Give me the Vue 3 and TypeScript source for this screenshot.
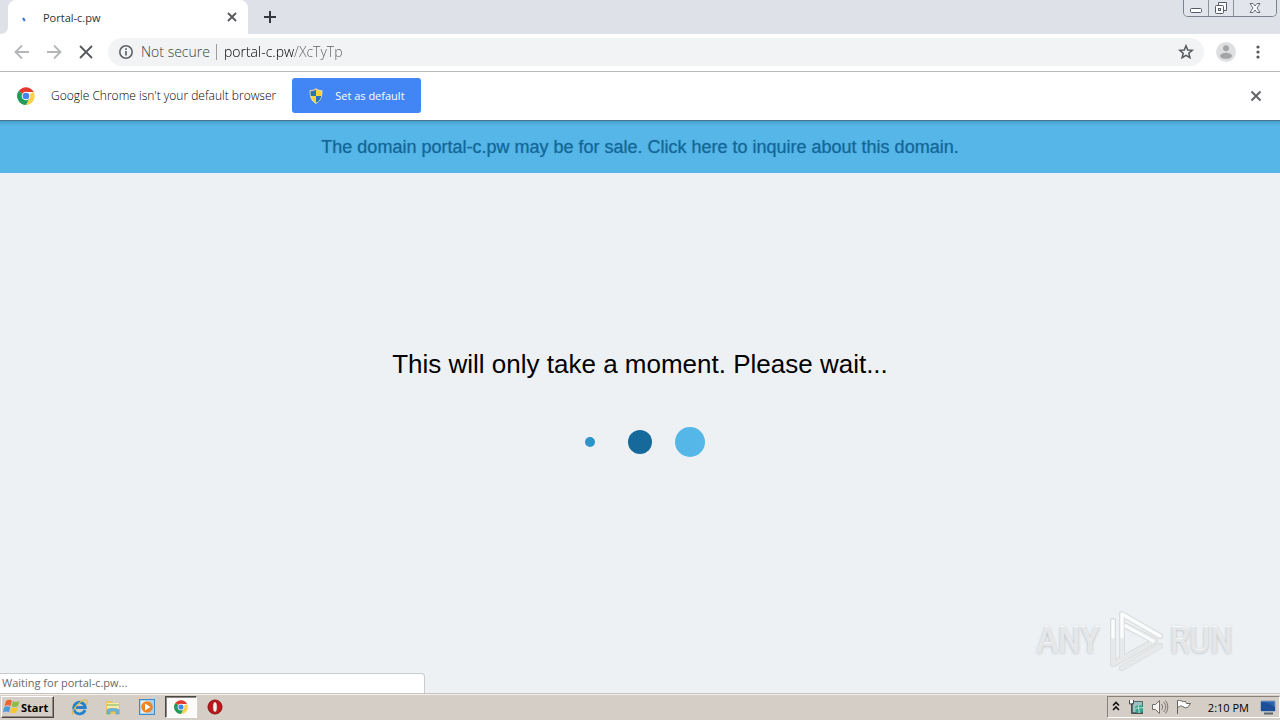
<script setup lang="ts">
import { ref } from 'vue'

const address = ref('portal-c.pw/XcTyTp')
const dots = [
  { name: 'small', size: 10, color: '#2e93c9' },
  { name: 'medium', size: 24, color: '#156a9b' },
  { name: 'large', size: 30, color: '#55b7e8' },
]
</script>

<template>
  <div class="desktop">
    <header class="tabstrip">
      <div class="edge"></div>
      <div class="tab">
        <svg class="spinner" width="16" height="16" viewBox="0 0 16 16"><path d="M5 9l1.800 3" stroke="#3e73cf" stroke-width="2.200" /></svg>
        <span class="tab-title">Portal-c.pw</span>
        <button class="plain" aria-label="Close tab">
          <svg width="16" height="16" viewBox="0 0 16 16"><path d="M4 4l8 8M12 4l-8 8" stroke="#55585c" stroke-width="1.8" /></svg>
        </button>
      </div>
      <button class="plain new-tab" aria-label="New tab">
        <svg width="16" height="16" viewBox="0 0 16 16"><path d="M8 2v12M2 8h12" stroke="#34373c" stroke-width="2" /></svg>
      </button>
      <div class="window-buttons">
        <button aria-label="Minimize"><svg width="14" height="14" viewBox="0 0 14 14"><rect x="1.500" y="7.500" width="11" height="4" rx="1" fill="#fff" stroke="#555b68" /></svg></button>
        <button aria-label="Restore"><svg width="14" height="14" viewBox="0 0 14 14"><path d="M4.500 4V1.500h8v8H10" fill="#fff" stroke="#555b68" /><rect x="1.500" y="4.500" width="8" height="8" rx="1" fill="#fff" stroke="#555b68" /><rect x="4.500" y="7.500" width="2" height="2" fill="none" stroke="#555b68" /></svg></button>
        <button class="wide" aria-label="Close"><svg width="14" height="14" viewBox="0 0 14 14"><path d="M2 2.500h3l2 2.500 2-2.500h3L9 7l3 4.500H9L7 9l-2 2.500H2L5 7z" fill="#fff" stroke="#666c78" /></svg></button>
      </div>
    </header>

    <nav class="toolbar">
      <button class="plain" aria-label="Back"><svg width="20" height="20" viewBox="0 0 20 20"><path d="M17 10H4M10 3.500L3.500 10l6.500 6.500" fill="none" stroke="#b4b6b8" stroke-width="1.8" /></svg></button>
      <button class="plain" aria-label="Forward"><svg width="20" height="20" viewBox="0 0 20 20"><path d="M3 10h13M10 3.500l6.500 6.500-6.500 6.500" fill="none" stroke="#b4b6b8" stroke-width="1.8" /></svg></button>
      <button class="plain" aria-label="Stop loading"><svg width="20" height="20" viewBox="0 0 20 20"><path d="M4 4l12 12M16 4L4 16" stroke="#55585c" stroke-width="1.8" /></svg></button>
      <div class="omnibox">
        <button class="plain" aria-label="Site information"><svg width="16" height="16" viewBox="0 0 16 16"><circle cx="8" cy="8" r="6.200" fill="none" stroke="#5f6368" stroke-width="1.6" /><path d="M8 7v4.500M8 4.300v1.600" stroke="#5f6368" stroke-width="1.700" /></svg></button>
        <label class="security" for="address">Not secure</label>
        <input id="address" v-model="address" class="address" type="text" spellcheck="false" />
        <button class="plain" aria-label="Bookmark this page"><svg width="18" height="18" viewBox="0 0 18 18"><path d="M9 2.800l1.700 4.200 4.500.3-3.400 3 1.100 4.400L9 12.300l-3.900 2.400 1.100-4.400-3.400-3 4.500-.3z" fill="none" stroke="#55585c" stroke-width="1.500" /></svg></button>
      </div>
      <button class="plain profile" aria-label="Profile"><svg width="20" height="20" viewBox="0 0 20 20"><circle cx="10" cy="10" r="10" fill="#dedfe1" /><circle cx="10" cy="6.300" r="3" fill="#a3a5a7" /><ellipse cx="10" cy="13.800" rx="6" ry="3" fill="#a3a5a7" /></svg></button>
      <button class="plain" aria-label="Menu"><svg width="16" height="16" viewBox="0 0 16 16" fill="#55585c"><circle cx="8" cy="3" r="1.600" /><circle cx="8" cy="8" r="1.600" /><circle cx="8" cy="13" r="1.600" /></svg></button>
    </nav>

    <section class="infobar">
      <svg class="chrome-logo" width="18" height="18" viewBox="0 0 18 18"><path d="M9 9L1.600 4A9 9 0 0 1 16.800 5H9z" fill="#e23b2e" /><path d="M9 9L16.800 5A9 9 0 0 1 9 18l3.500-7z" fill="#fdd04b" /><path d="M1.600 4A9 9 0 0 0 9 18l3.500-7L9 9z" fill="#229b58" /><circle cx="9" cy="9" r="4.300" fill="#fff" /><circle cx="9" cy="9" r="3.300" fill="#4384ee" /></svg>
      <span class="infobar-text">Google Chrome isn't your default browser</span>
      <button class="set-default">
        <svg width="16" height="16" viewBox="0 0 16 16"><path d="M8 .8c2 1.400 4 1.900 6 1.900 0 6-1.500 10.300-6 12.700C3.500 13 2 8.700 2 2.700c2 0 4-.5 6-1.900z" fill="#f6d33c" stroke="#e9e1b8" /><path d="M8 1.800V8H2.800C2.500 6 2.500 5 2.500 3.300 5 3 6.500 2.700 8 1.800zM8 8h5.200c-.7 3.300-2.200 5.500-5.200 6.800z" fill="#2874bb" /></svg>
        <span>Set as default</span>
      </button>
      <button class="plain dismiss" aria-label="Dismiss"><svg width="16" height="16" viewBox="0 0 16 16"><path d="M3.500 3.500l9 9M12.500 3.500l-9 9" stroke="#606367" stroke-width="2" /></svg></button>
    </section>

    <a class="sale-banner" href="#">The domain portal-c.pw may be for sale. Click here to inquire about this domain.</a>

    <main class="page">
      <h1>This will only take a moment. Please wait...</h1>
      <div class="loader">
        <div v-for="dot in dots" :key="dot.name" class="slot">
          <span class="dot" :style="{ width: dot.size + 'px', height: dot.size + 'px', background: dot.color }"></span>
        </div>
      </div>
      <div class="watermark">
        <span>ANY</span>
        <svg width="60" height="64" viewBox="0 0 60 64" fill="none" stroke-linejoin="round" stroke-linecap="round">
          <g stroke="#cfd2d4" stroke-width="6"><path d="M17 47V5l38 22" /><path d="M8 12v43l42-23L21 17" /><path d="M17 59l38-22" /></g>
          <g stroke="#e6e8ea" stroke-width="5"><path d="M17 47V5l38 22" /><path d="M8 12v43l42-23L21 17" /><path d="M17 59l38-22" /></g>
          <path d="M8 28V12M17 28V5l38 22M21 17l27 15" stroke="#fcfdfd" stroke-width="3" />
        </svg>
        <span>RUN</span>
      </div>
      <div class="status">Waiting for portal-c.pw...</div>
    </main>

    <footer class="taskbar">
      <button class="start">
        <svg width="18" height="16" viewBox="0 0 18 16"><path d="M3 2c2-1.500 4-1.500 6-.3L7.500 7C5.500 6 4 6 1.500 7z" fill="#ed6530" /><path d="M10 2.300c2 1 4 1 6.500-.3L15 7.300c-2.500 1-4.500 1-6.500 0z" fill="#8bbd43" /><path d="M1.300 8c2.200-1 4-1 6 0L6 13.300c-2-1-4-1-6 0z" fill="#4b9ada" /><path d="M8.300 8.300c2.200 1 4 1 6.500 0L13.300 13.500c-2.300 1-4.300 1-6.300 0z" fill="#f8c634" /></svg>
        <span>Start</span>
      </button>
      <div class="launchers">
        <button class="plain launcher" aria-label="Internet Explorer"><svg width="18" height="18" viewBox="0 0 18 18"><path d="M15 12A5.800 5.800 0 1 1 15.300 9.500H6" fill="none" stroke="#2382c9" stroke-width="2.800" /><path d="M3 16.500C0 14 11 1 16 2c2 .5 1 3.500 0 4.500" fill="none" stroke="#e6b93e" stroke-width="1.200" /></svg></button>
        <button class="plain launcher" aria-label="Explorer"><svg width="18" height="18" viewBox="0 0 18 18"><path d="M2 3h6l1 2h7v11H2z" fill="#e8c75b" /><path d="M3 5h12v8H3z" fill="#f8eba7" /><path d="M3 7h12" stroke="#73b56b" stroke-width="1" /><path d="M3 16v-4c0-2 12-2 12 0v4h-3v-3H6v3z" fill="#6fb8dc" stroke="#4d99c7" stroke-width=".6" /></svg></button>
        <button class="plain launcher" aria-label="Media Player"><svg width="18" height="18" viewBox="0 0 18 18"><rect x="1.500" y="1.500" width="15" height="15" fill="#a9d2f0" stroke="#3c8ac8" /><rect x="3" y="3" width="8" height="12" fill="#e1f0fa" /><circle cx="9" cy="9" r="5.800" fill="#ed8421" /><path d="M7 5.500L12.500 9 7 12.500z" fill="#fff" /></svg></button>
        <button class="launcher active" aria-label="Chrome"><svg width="14" height="14" viewBox="0 0 18 18"><path d="M9 9L1.600 4A9 9 0 0 1 16.800 5H9z" fill="#e23b2e" /><path d="M9 9L16.800 5A9 9 0 0 1 9 18l3.500-7z" fill="#fdd04b" /><path d="M1.600 4A9 9 0 0 0 9 18l3.500-7L9 9z" fill="#229b58" /><circle cx="9" cy="9" r="4.300" fill="#fff" /><circle cx="9" cy="9" r="3.300" fill="#4384ee" /></svg></button>
        <button class="plain launcher" aria-label="Opera"><svg width="18" height="18" viewBox="0 0 18 18"><circle cx="9" cy="9" r="7" fill="#c3161b" stroke="#8c1015" /><ellipse cx="9" cy="9" rx="2.300" ry="5.300" fill="#f6f0ec" stroke="#8c1115" stroke-width=".8" /></svg></button>
      </div>
      <div class="tray">
        <svg width="10" height="14" viewBox="0 0 10 14"><path d="M2 5.500l3-3 3 3M2 10l3-3 3 3" fill="none" stroke="#111" stroke-width="1.600" /></svg>
        <svg width="18" height="16" viewBox="0 0 18 16"><rect x="5.500" y="2.500" width="10" height="11" fill="#9cc3c0" stroke="#526c72" /><circle cx="12" cy="10" r="4" fill="#39a394" /><path d="M8 10.500c3-3 4-1 8-2M12 6c-2 3 1 5 0 8" stroke="#b9edcf" fill="none" /><path d="M2.500 1v4h4V1M4.500 5v9.500H16" fill="none" stroke="#4d4f50" /><path d="M3 1v3h3V1" fill="#fff" /></svg>
        <svg width="18" height="16" viewBox="0 0 18 16"><path d="M1.500 5.500h3l4-4v13l-4-4h-3z" fill="#f6f5f3" stroke="#706d69" /><path d="M10.500 5c1.500 2 1.500 4 0 6M12.500 3c3 3 3 7 0 10M14.500 1.500c3 4 3 9 0 13" fill="none" stroke="#77736e" /></svg>
        <svg width="18" height="16" viewBox="0 0 18 16"><path d="M2.500 15V1.500c3-1 5 2 8 1l1 2h4l-3 4c-3 1-4-1-6-1.500-2 0-2 1-4 1z" fill="#fff" stroke="#67635f" /></svg>
        <time>2:10 PM</time>
        <svg width="16" height="16" viewBox="0 0 16 16"><path d="M1 2h14v10H1z" fill="#2864b0" stroke="#809cbd" /><path d="M1 3c5 0 9 2 14 5v4H1z" fill="#1d4e98" /><path d="M4 14.500h9" stroke="#57656f" stroke-width="2" /></svg>
      </div>
    </footer>
  </div>
</template>

<style>
body { margin: 0; }
</style>

<style scoped>
* { box-sizing: border-box; }
.desktop { display: flex; flex-direction: column; min-height: 100vh; background: #edf1f4; font-family: "Open Sans", "Noto Sans", sans-serif; font-size: 12px; color: #303236; }
button { font: inherit; color: inherit; padding: 0; margin: 0; border: 0; }
svg { display: block; flex: none; }
.plain { display: flex; align-items: center; justify-content: center; background: none; flex: none; }
.tabstrip { display: flex; height: 34px; background: #dee1e8; flex: none; }
.edge { width: 8px; background: #fff; }
.edge::before { content: ""; display: block; height: 34px; background: #dee1e8; border-bottom-right-radius: 7px; }
.tab { display: flex; align-items: center; width: 240px; padding: 0 8px 0 10px; gap: 9px; background: #fff; border-radius: 8px 8px 0 0; font-size: 11px; }
.tab-title { flex: 1; }
.new-tab { width: 44px; }
.window-buttons { display: flex; height: 17px; margin-left: auto; margin-right: 3px; border: 1px solid #7c828d; border-top: 0; border-radius: 0 0 5px 5px; overflow: hidden; }
.window-buttons button { display: flex; align-items: center; justify-content: center; width: 25px; background: #e2e5eb; border-right: 1px solid #8c929d; }
.window-buttons .wide { width: 42px; border-right: 0; }
.toolbar { display: flex; align-items: center; height: 38px; padding: 0 14px 2px 12px; gap: 12px; background: #fff; border-bottom: 1px solid #b6bab8; flex: none; }
.omnibox { display: flex; flex: 1; align-items: center; height: 28px; border-radius: 14px; background: #f1f3f4; padding: 0 9px 0 10px; font-size: 14px; min-width: 0; }
.security { margin-left: 7px; padding-right: 6px; line-height: 16px; font-weight: 300; border-right: 1px solid #9b9ea1; color: #3b3e42; white-space: nowrap; }
.address { flex: 1; min-width: 0; height: 28px; border: 0; outline: 0; padding: 0; margin-left: 7px; font: inherit; font-weight: 300; background: linear-gradient(90deg, #000 70px, #5b5e62 70px) text; -webkit-text-fill-color: transparent; }
.profile { margin-right: 2px; }
.infobar { display: flex; align-items: center; min-height: 49px; padding: 0 16px 1px 17px; background: #fff; border-bottom: 1px solid #4a7890; font-size: 12px; flex: none; }
.chrome-logo { margin-right: 16px; }
.infobar-text { font-weight: 300; color: #000; }
.set-default { display: flex; align-items: center; gap: 11px; height: 35px; padding: 0 16px; margin-left: 16px; background: #4285f4; color: #fff; border-radius: 3px; font-size: 11px; white-space: nowrap; }
.dismiss { margin-left: auto; }
.sale-banner { display: flex; align-items: center; justify-content: center; min-height: 52px; background: linear-gradient(#45a0cd, #57b6e8 5px); color: #136797; font-family: "Liberation Sans", sans-serif; font-size: 18px; text-decoration: none; text-shadow: 0 0 1px #13679799; text-align: center; flex: none; }
.page { position: relative; display: flex; flex: 1; flex-direction: column; align-items: center; justify-content: center; padding-bottom: 51px; }
h1 { margin: 0; font: 400 26px/32px "Liberation Sans", sans-serif; color: #000; text-align: center; }
.loader { display: flex; margin-top: 37px; }
.slot { display: flex; align-items: center; justify-content: center; width: 50px; height: 50px; }
.dot { border-radius: 50%; }
.watermark { position: absolute; right: 47px; bottom: 20px; display: flex; align-items: center; gap: 5px; font: 400 37px/64px "Liberation Sans Narrow", "Roboto Condensed", "Liberation Sans", sans-serif; color: #e4e6e8; text-shadow: 0 -1px #fcfdfd, 0 0 3px #a5a9ad; }
.status { position: absolute; left: 0; bottom: 0; width: 425px; height: 20px; padding-left: 2px; background: #fff; border: solid #c9cccf; border-width: 1px 1px 0 0; border-top-right-radius: 4px; color: #66696c; font-size: 11px; line-height: 18px; }
.taskbar { display: flex; align-items: center; height: 27px; padding: 0 0 0 1px; background: #d5cec6; border-top: 1px solid #c5c3bf; box-shadow: inset 0 1px #f3f0eb; flex: none; }
.start { display: flex; align-items: center; gap: 0; width: 53px; height: 22px; padding: 0 1px; background: #d5cec6; border: 1px solid; border-color: #fff #4a4744 #4a4744 #fff; box-shadow: inset -1px -1px #918b84; font-size: 11px; font-weight: 700; color: #000; }
.launchers { display: flex; align-items: center; margin-left: 8px; }
.launcher { display: flex; align-items: center; justify-content: center; width: 34px; height: 22px; }
.active { width: 32px; margin: 0 1px; background: #fbfaf8; border: 1px solid; border-color: #4a4744 #fff #fff #4a4744; box-shadow: inset 1px 1px #8c8882; }
.tray { display: flex; align-items: center; gap: 6px; height: 22px; margin-left: auto; padding: 0 3px; border: 1px solid; border-color: #88827b #fff #fff #88827b; font-size: 11px; color: #000; }
time { margin: 0 5px 0 9px; }
</style>
